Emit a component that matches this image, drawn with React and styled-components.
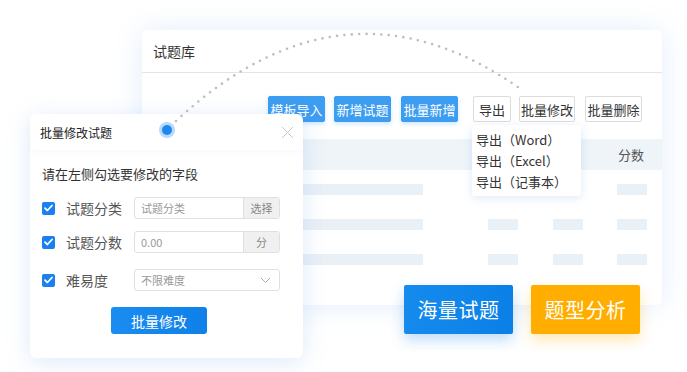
import React from 'react';
import styled, { createGlobalStyle } from 'styled-components';

const GlobalStyle = createGlobalStyle`
  html, body {
    margin: 0;
    padding: 0;
    background: #fff;
  }
  body {
    font-family: "Noto Sans CJK SC", "Noto Sans", sans-serif;
    color: #333;
  }
`;

const Stage = styled.div`
  position: relative;
  width: 687px;
  height: 372px;
  overflow: hidden;
  background: #fff;
`;

/* ---------- question bank card ---------- */

const BankCard = styled.div`
  position: absolute;
  left: 142px;
  top: 30px;
  width: 520px;
  height: 275px;
  background: #fff;
  border-radius: 6px;
  box-shadow: 0 0 28px rgba(80, 150, 235, 0.16);
  display: flex;
  flex-direction: column;
  overflow: hidden;
`;

const CardHeader = styled.div`
  height: 42px;
  display: flex;
  align-items: center;
  padding-left: 11px;
  font-size: 14px;
  color: #333;
  border-bottom: 1px solid #e4e4e4;
`;

const Toolbar = styled.div`
  display: flex;
  justify-content: flex-end;
  align-items: center;
  margin-top: 23px;
  padding-right: 20px;
  height: 26px;
`;

const ToolButton = styled.div`
  box-sizing: border-box;
  width: ${p => p.$w}px;
  height: 26px;
  margin-left: ${p => p.$gap}px;
  display: flex;
  align-items: center;
  justify-content: center;
  font-size: 13px;
  border-radius: 2px;
  background: ${p => (p.$primary ? '#3d9df1' : '#fff')};
  color: ${p => (p.$primary ? '#fff' : '#333')};
  border: 1px solid ${p => (p.$primary ? '#3d9df1' : '#dcdcdc')};
  box-shadow: ${p => (p.$primary ? '0 2px 4px rgba(61,157,241,0.25)' : 'none')};
`;

const TableHead = styled.div`
  margin-top: 17px;
  height: 31px;
  background: #eef4f8;
  display: flex;
  align-items: center;
  justify-content: flex-end;
  padding-right: 16px;
`;

const HeadCell = styled.div`
  width: 30px;
  text-align: center;
  font-size: 13px;
  color: #555;
  white-space: nowrap;
`;

const Rows = styled.div`
  padding-top: 14px;
  display: flex;
  flex-direction: column;
  gap: 24px;
`;

const Row = styled.div`
  display: flex;
  padding-left: 18px;
  height: 11px;
`;

const Bar = styled.div`
  width: ${p => p.$w}px;
  margin-left: ${p => p.$ml || 0}px;
  height: 11px;
  background: #eaf1f6;
`;

const Dropdown = styled.div`
  position: absolute;
  left: 472px;
  top: 125px;
  width: 109px;
  box-sizing: border-box;
  padding: 4px 0 4px 4px;
  background: #fff;
  border-radius: 4px;
  box-shadow: 0 2px 10px rgba(70, 140, 220, 0.18);
  display: flex;
  flex-direction: column;
`;

const DropItem = styled.div`
  height: 21px;
  line-height: 21px;
  font-size: 13px;
  color: #333;
  white-space: nowrap;
`;

/* ---------- batch edit modal ---------- */

const Modal = styled.div`
  position: absolute;
  left: 30px;
  top: 114px;
  width: 273px;
  height: 244px;
  background: #fff;
  border-radius: 6px;
  box-shadow: 0 4px 24px rgba(70, 140, 225, 0.18);
  display: flex;
  flex-direction: column;
`;

const ModalHeader = styled.div`
  height: 36px;
  display: flex;
  align-items: center;
  justify-content: space-between;
  padding: 0 9px 0 10px;
  font-size: 12px;
  color: #222;
  box-shadow: 0 3px 6px rgba(0, 0, 0, 0.025);
`;

const CloseIcon = styled.svg`
  width: 13px;
  height: 13px;
`;

const ModalBody = styled.div`
  padding: 15px 0 0 12px;
  display: flex;
  flex-direction: column;
`;

const Hint = styled.div`
  font-size: 13px;
  color: #333;
  line-height: 18px;
  margin-bottom: 14px;
`;

const Field = styled.div`
  display: flex;
  align-items: center;
  height: 22px;
  margin-bottom: ${p => p.$mb}px;
`;

const Check = styled.div`
  width: 13px;
  height: 13px;
  border-radius: 2px;
  background: #1a7ff0;
  display: flex;
  align-items: center;
  justify-content: center;
  margin-right: 11px;
`;

const Label = styled.div`
  width: 68px;
  font-size: 14px;
  color: #555;
`;

const InputGroup = styled.div`
  width: 146px;
  height: 22px;
  box-sizing: border-box;
  border: 1px solid #e0e0e0;
  border-radius: 3px;
  display: flex;
  overflow: hidden;
`;

const InputText = styled.div`
  flex: 1;
  display: flex;
  align-items: center;
  justify-content: space-between;
  padding: 0 8px 0 6px;
  font-size: 11px;
  color: #999;
`;

const Addon = styled.div`
  width: 35px;
  border-left: 1px solid #e0e0e0;
  background: #f0f0f0;
  display: flex;
  align-items: center;
  justify-content: center;
  font-size: 11px;
  color: #888;
`;

const SubmitButton = styled.div`
  margin: 16px 0 0 69px;
  width: 96px;
  height: 27px;
  border-radius: 3px;
  background: linear-gradient(90deg, #1b8cf0, #0e80e8);
  color: #fff;
  font-size: 14px;
  display: flex;
  align-items: center;
  justify-content: center;
`;

/* ---------- badges ---------- */

const Badge = styled.div`
  position: absolute;
  top: 285px;
  left: ${p => p.$left}px;
  width: 109px;
  height: 49px;
  border-radius: 2px;
  display: flex;
  align-items: center;
  justify-content: center;
  color: #fff;
  font-size: 20px;
  letter-spacing: 0.5px;
  background: ${p => p.$bg};
  box-shadow: ${p => p.$shadow};
`;

const Overlay = styled.svg`
  position: absolute;
  left: 0;
  top: 0;
  width: 687px;
  height: 372px;
  pointer-events: none;
`;

const CheckMark = () => (
  <svg width="9" height="8" viewBox="0 0 9 8">
    <path d="M1 4.2 L3.4 6.5 L8 1.5" fill="none" stroke="#fff" strokeWidth="1.8" strokeLinecap="round" strokeLinejoin="round" />
  </svg>
);

const Chevron = () => (
  <svg width="11" height="7" viewBox="0 0 11 7">
    <path d="M1 1 L5.5 5.5 L10 1" fill="none" stroke="#aaa" strokeWidth="1" />
  </svg>
);

const toolButtons = [
  { t: '模板导入', w: 57, gap: 0, primary: true },
  { t: '新增试题', w: 57, gap: 9, primary: true },
  { t: '批量新增', w: 57, gap: 10, primary: true },
  { t: '导出', w: 38, gap: 15 },
  { t: '批量修改', w: 56, gap: 8 },
  { t: '批量删除', w: 57, gap: 10 },
];

const fields = [
  { label: '试题分类', value: '试题分类', addon: '选择', mb: 12 },
  { label: '试题分数', value: '0.00', addon: '分', mb: 16 },
  { label: '难易度', value: '不限难度', select: true, mb: 0 },
];

export default function App() {
  return (
    <Stage>
      <GlobalStyle />
      <BankCard>
        <CardHeader>试题库</CardHeader>
        <Toolbar>
          {toolButtons.map(b => (
            <ToolButton key={b.t} $w={b.w} $gap={b.gap} $primary={b.primary}>
              {b.t}
            </ToolButton>
          ))}
        </Toolbar>
        <TableHead>
          <HeadCell>分数</HeadCell>
        </TableHead>
        <Rows>
          <Row>
            <Bar $w={263} />
            <Bar $w={30} $ml={194} />
          </Row>
          <Row>
            <Bar $w={263} />
            <Bar $w={30} $ml={65} />
            <Bar $w={30} $ml={35} />
            <Bar $w={30} $ml={34} />
          </Row>
          <Row>
            <Bar $w={263} />
            <Bar $w={30} $ml={65} />
            <Bar $w={30} $ml={35} />
            <Bar $w={30} $ml={34} />
          </Row>
        </Rows>
      </BankCard>

      <Dropdown>
        <DropItem>导出（Word）</DropItem>
        <DropItem>导出（Excel）</DropItem>
        <DropItem>导出（记事本）</DropItem>
      </Dropdown>

      <Modal>
        <ModalHeader>
          批量修改试题
          <CloseIcon viewBox="0 0 13 13">
            <path d="M1 1 L12 12 M12 1 L1 12" stroke="#c8c8c8" strokeWidth="1" />
          </CloseIcon>
        </ModalHeader>
        <ModalBody>
          <Hint>请在左侧勾选要修改的字段</Hint>
          {fields.map(f => (
            <Field key={f.label} $mb={f.mb}>
              <Check>
                <CheckMark />
              </Check>
              <Label>{f.label}</Label>
              <InputGroup>
                <InputText>
                  {f.value}
                  {f.select && <Chevron />}
                </InputText>
                {f.addon && <Addon>{f.addon}</Addon>}
              </InputGroup>
            </Field>
          ))}
          <SubmitButton>批量修改</SubmitButton>
        </ModalBody>
      </Modal>

      <Badge
        $left={404}
        $bg="linear-gradient(90deg, #168bee, #0a7fe6)"
        $shadow="0 6px 14px rgba(20, 130, 235, 0.28)"
      >
        海量试题
      </Badge>
      <Badge
        $left={531}
        $bg="#ffae00"
        $shadow="0 6px 14px rgba(255, 175, 0, 0.3)"
      >
        题型分析
      </Badge>

      <Overlay viewBox="0 0 687 372">
        <path
          d="M176 121 Q345 -36 522 90"
          fill="none"
          stroke="#bdbdbd"
          strokeWidth="2.6"
          strokeLinecap="round"
          strokeDasharray="0 7.4"
        />
        <circle cx="167" cy="130" r="8" fill="#b8d9fb" />
        <circle cx="167" cy="130" r="5" fill="#1e88ef" />
      </Overlay>
    </Stage>
  );
}
